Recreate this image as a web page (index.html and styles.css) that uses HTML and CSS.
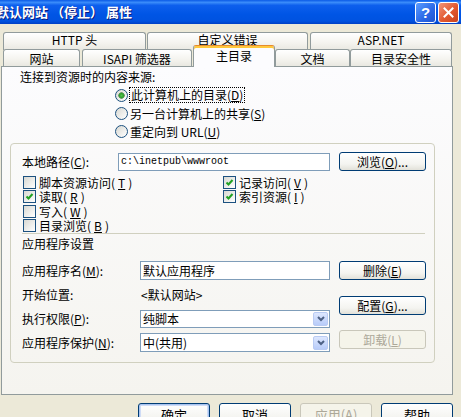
FILE: index.html
```html
<!DOCTYPE html>
<html lang="zh-CN">
<head>
    <meta charset="UTF-8">
    <meta name="viewport" content="width=device-width, initial-scale=1.0">
    <title>默认网站 (停止) 属性</title>
    <link rel="stylesheet" href="styles.css">
</head>
<body>
    <div class="window">
        <!-- caption bar -->
        <div class="titlebar">
            <span class="title">默认网站 （停止） 属性</span>
            <div class="caption-btns">
                <span class="cap-btn help">?</span>
                <span class="cap-btn close">
                    <svg width="11" height="11" viewBox="0 0 11 11"><path d="M1.5 1.5 L9.5 9.5 M9.5 1.5 L1.5 9.5" stroke="#fff" stroke-width="2" stroke-linecap="square"/></svg>
                </span>
            </div>
        </div>

        <!-- property sheet tabs -->
        <div class="tabs">
            <div class="tab-row back">
                <div class="tab t-http">HTTP 头</div>
                <div class="tab t-err">自定义错误</div>
                <div class="tab t-asp">ASP.NET</div>
            </div>
            <div class="tab-row front">
                <div class="tab t-site">网站</div>
                <div class="tab t-isapi">ISAPI 筛选器</div>
                <div class="tab t-home active">主目录</div>
                <div class="tab t-doc">文档</div>
                <div class="tab t-sec">目录安全性</div>
            </div>
        </div>

        <div class="panel">
            <div class="source-head">连接到资源时的内容来源:</div>
            <div class="radio-list">
                <div class="radio-row"><span class="radio checked"></span><span class="focus">此计算机上的目录(<u>D</u>)</span></div>
                <div class="radio-row"><span class="radio"></span><span>另一台计算机上的共享(<u>S</u>)</span></div>
                <div class="radio-row"><span class="radio"></span><span>重定向到 URL(<u>U</u>)</span></div>
            </div>

            <div class="group">
                <div class="path-row">
                    <span class="path-label">本地路径(<u>C</u>):</span>
                    <div class="field path-field"><span class="mono">c:\inetpub\wwwroot</span></div>
                    <span class="btn side-btn">浏览(<u>O</u>)...</span>
                </div>

                <div class="checks">
                    <label class="check-row"><span class="check"></span>脚本资源访问(<u>T</u>)</label>
                    <label class="check-row"><span class="check checked"><svg width="11" height="11" viewBox="0 0 11 11"><path d="M2.5 5.5 L4.5 7.5 L8.5 3" fill="none" stroke="#21a121" stroke-width="2"/></svg></span>记录访问(<u>V</u>)</label>
                    <label class="check-row"><span class="check checked"><svg width="11" height="11" viewBox="0 0 11 11"><path d="M2.5 5.5 L4.5 7.5 L8.5 3" fill="none" stroke="#21a121" stroke-width="2"/></svg></span>读取(<u>R</u>)</label>
                    <label class="check-row"><span class="check checked"><svg width="11" height="11" viewBox="0 0 11 11"><path d="M2.5 5.5 L4.5 7.5 L8.5 3" fill="none" stroke="#21a121" stroke-width="2"/></svg></span>索引资源(<u>I</u>)</label>
                    <label class="check-row"><span class="check"></span>写入(<u>W</u>)</label>
                    <div></div>
                    <label class="check-row"><span class="check"></span>目录浏览(<u>B</u>)</label>
                </div>

                <div class="sep"></div>
                <div class="app-head">应用程序设置</div>

                <div class="app">
                    <div class="app-rows">
                        <div class="app-row">
                            <span class="app-label">应用程序名(<u>M</u>):</span>
                            <div class="field app-field tall">默认应用程序</div>
                        </div>
                        <div class="app-row">
                            <span class="app-label">开始位置:</span>
                            <span class="start-value">&lt;默认网站&gt;</span>
                        </div>
                        <div class="app-row">
                            <span class="app-label">执行权限(<u>P</u>):</span>
                            <div class="field app-field combo">
                                <span>纯脚本</span>
                                <span class="drop"><svg width="8" height="6" viewBox="0 0 8 6"><path d="M1 1 L4 4 L7 1" fill="none" stroke="#4d6185" stroke-width="2"/></svg></span>
                            </div>
                        </div>
                        <div class="app-row">
                            <span class="app-label">应用程序保护(<u>N</u>):</span>
                            <div class="field app-field combo tall">
                                <span>中(共用)</span>
                                <span class="drop"><svg width="8" height="6" viewBox="0 0 8 6"><path d="M1 1 L4 4 L7 1" fill="none" stroke="#4d6185" stroke-width="2"/></svg></span>
                            </div>
                        </div>
                    </div>
                    <div class="app-btns">
                        <span class="btn side-btn">删除(<u>E</u>)</span>
                        <span class="btn side-btn config">配置(<u>G</u>)...</span>
                        <span class="btn side-btn unload disabled">卸载(<u>L</u>)</span>
                    </div>
                </div>
            </div>
        </div>

        <div class="dlg-buttons">
            <span class="btn dlg-btn default">确定</span>
            <span class="btn dlg-btn">取消</span>
            <span class="btn dlg-btn disabled">应用(<u>A</u>)</span>
            <span class="btn dlg-btn">帮助</span>
        </div>
    </div>
</body>
</html>
```

FILE: styles.css
```css
body {
    margin: 0;
    background: #ece9d8;
    font-family: "Noto Sans CJK SC", "Noto Sans", sans-serif;
    font-size: 12px;
    color: #000;
}

.window {
    width: 461px;
    height: 417px;
    overflow: hidden;
    background: #ece9d8;
}

u {
    text-decoration: underline;
}

/* caption bar */
.titlebar {
    height: 24px;
    display: flex;
    align-items: center;
    justify-content: space-between;
    background: linear-gradient(#0a5ae6 0%, #3a8cfa 10%, #0d5fed 22%, #0055e5 60%, #0052e0 88%, #0040c4 100%);
}

.title {
    margin-left: -4px;
    color: #fff;
    font-weight: bold;
    font-size: 13px;
    line-height: 18px;
    white-space: nowrap;
    text-shadow: 1px 1px 0 #0a1c80;
}

.caption-btns {
    display: flex;
    gap: 2px;
    margin-right: 2px;
}

.cap-btn {
    box-sizing: border-box;
    width: 21px;
    height: 21px;
    border: 1px solid #fff;
    border-radius: 3px;
    display: flex;
    align-items: center;
    justify-content: center;
}

.help {
    background: linear-gradient(135deg, #5b9cff, #2a68e6 60%, #1f55d0);
    color: #fff;
    font-family: "Liberation Sans", Arial, sans-serif;
    font-weight: bold;
    font-size: 15px;
}

.close {
    background: linear-gradient(135deg, #f1957a, #e2582f 55%, #c9431d);
}

/* tabs */
.tabs {
    margin-top: 8px;
}

.tab-row {
    display: flex;
    align-items: flex-start;
    padding-left: 3px;
}

.tab-row.front {
    margin-top: -1px;
}

.tab {
    box-sizing: border-box;
    height: 18px;
    border: 1px solid #919b9c;
    border-bottom: none;
    border-radius: 3px 3px 0 0;
    background: linear-gradient(#ffffff, #f4f3ee 60%, #e9e8e1);
    text-align: center;
    line-height: 14px;
    white-space: nowrap;
}

.front .tab {
    height: 17px;
    line-height: 17px;
}

.t-http { width: 143px; margin-right: 1px; }
.t-err { width: 161px; margin-right: 2px; }
.t-asp { width: 142px; }

.t-site { width: 77px; margin-right: 2px; }
.t-isapi { width: 110px; margin-right: 1px; }
.t-home { width: 82px; }
.t-doc { width: 75px; }
.t-sec { width: 102px; }

.front .tab.active {
    position: relative;
    z-index: 2;
    height: 22px;
    margin-top: -4px;
    margin-bottom: -1px;
    line-height: 20px;
    background: #fcfcfe;
    border-top-color: #e68b2c;
    box-shadow: inset 0 2px 0 #ffc83c;
}

/* tab page */
.panel {
    position: relative;
    z-index: 1;
    box-sizing: border-box;
    width: 452px;
    height: 329px;
    margin-left: 1px;
    border: 1px solid #919b9c;
    background: linear-gradient(#fcfcfe, #f5f4ef);
}

.source-head {
    margin: 2px 0 0 18px;
    height: 16px;
    line-height: 16px;
}

.radio-list {
    margin-left: 113px;
    margin-top: 1px;
}

.radio-row {
    height: 18px;
    display: flex;
    align-items: center;
    gap: 2px;
}

.radio {
    box-sizing: border-box;
    width: 13px;
    height: 13px;
    border: 1px solid #1c5180;
    border-radius: 50%;
    background: linear-gradient(135deg, #d8d8d2, #ffffff);
}

.radio.checked {
    background: radial-gradient(circle, #59c255 0, #2ea22b 2px, #6b9a69 3px, transparent 3.5px),
                linear-gradient(135deg, #d8d8d2, #ffffff);
}

.focus {
    outline: 1px dotted #000;
    padding: 0 1px;
    line-height: 14px;
}

/* group box */
.group {
    box-sizing: border-box;
    width: 425px;
    height: 220px;
    margin: 3px 0 0 8px;
    border: 1px solid #d0d0bf;
    border-radius: 4px;
}

.path-row {
    display: flex;
    align-items: center;
    height: 19px;
    margin-top: 8px;
    padding-left: 11px;
}

.path-label {
    width: 96px;
}

.field {
    box-sizing: border-box;
    height: 18px;
    border: 1px solid #7f9db9;
    background: #fff;
    display: flex;
    align-items: center;
    padding-left: 2px;
    white-space: nowrap;
}

.field.tall {
    height: 19px;
}

.path-field {
    width: 212px;
}

.mono {
    font-family: "Liberation Mono", monospace;
    font-size: 10px;
}

.btn {
    box-sizing: border-box;
    border: 1px solid #003c74;
    border-radius: 3px;
    background: linear-gradient(#ffffff, #f4f4f0 65%, #e2e1d9);
    display: flex;
    align-items: center;
    justify-content: center;
    white-space: nowrap;
}

.btn.disabled {
    border-color: #c9c7ba;
    background: #f5f4ea;
    color: #aca899;
}

.side-btn {
    width: 87px;
    height: 19px;
    margin-left: 9px;
}

.checks {
    display: grid;
    grid-template-columns: 200px 1fr;
    grid-auto-rows: 14.5px;
    margin-top: 4px;
    padding-left: 12px;
}

.check-row {
    display: flex;
    align-items: center;
    gap: 3px;
    height: 14.5px;
    line-height: 13px;
    white-space: nowrap;
}

.check {
    box-sizing: border-box;
    flex: none;
    width: 13px;
    height: 13px;
    border: 1px solid #1c5180;
    background: linear-gradient(135deg, #d8d8d2, #ffffff);
    display: flex;
}

.sep {
    height: 1px;
    margin: 0 9px 0 11px;
    background: #d0d0bf;
}

.app-head {
    margin: 2px 0 0 11px;
    height: 16px;
    line-height: 16px;
}

.app {
    display: flex;
    margin-top: 9px;
    padding-left: 11px;
}

.app-rows {
    display: flex;
    flex-direction: column;
    gap: 5px;
}

.app-row {
    display: flex;
    align-items: center;
    height: 19px;
}

.app-label {
    width: 118px;
}

.app-field {
    width: 190px;
}

.start-value {
    padding-left: 1px;
}

.combo .drop {
    box-sizing: border-box;
    width: 15px;
    height: 14px;
    margin-left: auto;
    margin-right: 1px;
    border: 1px solid #b9cbf3;
    border-radius: 2px;
    background: linear-gradient(#dde7fe, #b8ccf9);
    display: flex;
    align-items: center;
    justify-content: center;
}

.app-btns {
    display: flex;
    flex-direction: column;
}

.app-btns .config {
    margin-top: 16px;
}

.app-btns .unload {
    margin-top: 15px;
}

/* dialog buttons */
.dlg-buttons {
    display: flex;
    justify-content: flex-end;
    gap: 9px;
    margin-top: 8px;
    padding-right: 8px;
}

.dlg-btn {
    width: 72px;
    height: 23px;
    font-size: 13px;
}

.dlg-btn.default {
    box-shadow: inset 0 0 0 1px #a9c4f0, inset 0 0 0 2px #cfdcf6;
}
```
